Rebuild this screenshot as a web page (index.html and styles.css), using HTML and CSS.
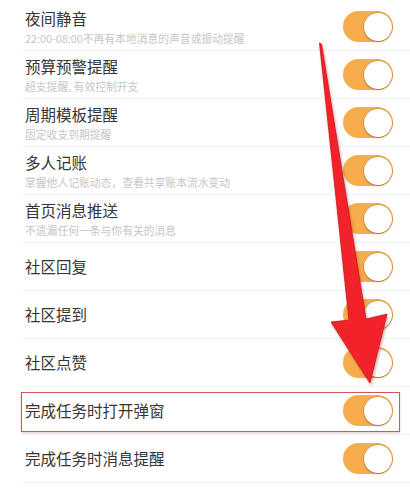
FILE: index.html
```html
<!DOCTYPE html>
<html lang="zh-CN">
<head>
<meta charset="utf-8">
<title>消息设置</title>
<link rel="stylesheet" href="styles.css">
</head>
<body>
<div class="page">
  <ul class="list">
    <li class="row">
      <div class="text"><div class="title">夜间静音</div><div class="sub">22:00-08:00不再有本地消息的声音或振动提醒</div></div>
      <span class="switch"><span class="knob"></span></span>
    </li>
    <li class="row">
      <div class="text"><div class="title">预算预警提醒</div><div class="sub">超支提醒, 有效控制开支</div></div>
      <span class="switch"><span class="knob"></span></span>
    </li>
    <li class="row">
      <div class="text"><div class="title">周期模板提醒</div><div class="sub">固定收支到期提醒</div></div>
      <span class="switch"><span class="knob"></span></span>
    </li>
    <li class="row">
      <div class="text"><div class="title">多人记账</div><div class="sub">掌握他人记账动态，查看共享账本流水变动</div></div>
      <span class="switch"><span class="knob"></span></span>
    </li>
    <li class="row">
      <div class="text"><div class="title">首页消息推送</div><div class="sub">不遗漏任何一条与你有关的消息</div></div>
      <span class="switch"><span class="knob"></span></span>
    </li>
    <li class="row">
      <div class="text"><div class="title">社区回复</div></div>
      <span class="switch"><span class="knob"></span></span>
    </li>
    <li class="row">
      <div class="text"><div class="title">社区提到</div></div>
      <span class="switch"><span class="knob"></span></span>
    </li>
    <li class="row">
      <div class="text"><div class="title">社区点赞</div></div>
      <span class="switch"><span class="knob"></span></span>
    </li>
    <li class="row highlighted">
      <div class="text"><div class="title">完成任务时打开弹窗</div></div>
      <span class="switch"><span class="knob"></span></span>
      <span class="mark"></span>
    </li>
    <li class="row">
      <div class="text"><div class="title">完成任务时消息提醒</div></div>
      <span class="switch"><span class="knob"></span></span>
    </li>
  </ul>
  <svg class="arrow" width="410" height="496" viewBox="0 0 410 496" aria-hidden="true">
    <defs>
      <filter id="sh" x="-20%" y="-20%" width="140%" height="140%">
        <feDropShadow dx="1" dy="2" stdDeviation="1.5" flood-color="#600" flood-opacity="0.35"/>
      </filter>
    </defs>
    <polygon filter="url(#sh)" points="319.5,43 321.5,44 366,319 387,314 370,383 331,322 349,320" fill="#f2242a" stroke="#c9161c" stroke-width="0.8" stroke-linejoin="round"/>
  </svg>
</div>
</body>
</html>
```

FILE: styles.css
```css
html, body {
  margin: 0;
  padding: 0;
  background: #ffffff;
}

.page {
  position: relative;
  width: 410px;
  height: 496px;
  overflow: hidden;
  font-family: "Noto Sans CJK SC", "Noto Sans", "Liberation Sans", sans-serif;
}

.list {
  list-style: none;
  margin: 0;
  padding: 3px 0 0 22px;
}

.row {
  position: relative;
  display: flex;
  align-items: center;
  justify-content: space-between;
  height: 48px;
  box-sizing: border-box;
  padding: 0 17px 0 3px;
  border-bottom: 1px solid #f1f1f1;
}

.text {
  display: flex;
  flex-direction: column;
  padding-bottom: 1px;
}

.title {
  font-size: 15.5px;
  line-height: 23px;
  color: #353535;
}

.sub {
  font-size: 10.8px;
  line-height: 16px;
  color: #c6c6c6;
}

.switch {
  position: relative;
  flex: none;
  width: 50px;
  height: 31px;
  border-radius: 16px;
  background: #f7ad4d;
  display: flex;
  align-items: center;
  justify-content: flex-end;
  padding-right: 1px;
  box-sizing: border-box;
}

.knob {
  width: 28px;
  height: 28px;
  border-radius: 50%;
  background: #ffffff;
  box-shadow: 0 1px 2px rgba(140, 80, 10, 0.55), 0 0 0 0.5px rgba(180, 110, 30, 0.5);
}

.mark {
  position: absolute;
  left: -1px;
  right: 10px;
  top: 5px;
  height: 40px;
  border: 1.5px solid #d9515b;
  box-sizing: border-box;
  box-shadow: 0 1px 2px rgba(150, 30, 40, 0.25);
}

.arrow {
  position: absolute;
  left: 0;
  top: 0;
  pointer-events: none;
}
```
